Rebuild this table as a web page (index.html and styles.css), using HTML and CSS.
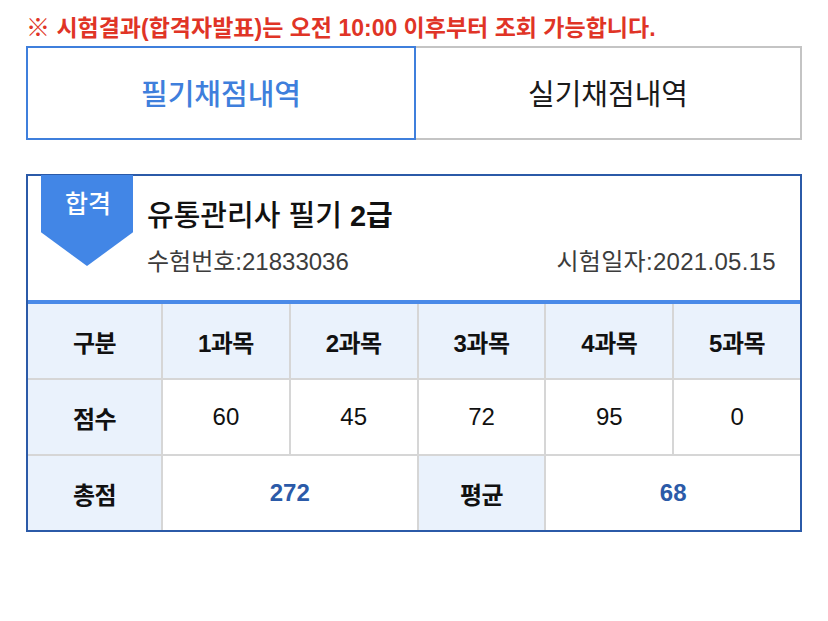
FILE: index.html
```html
<!DOCTYPE html>
<html lang="ko">
<head>
<meta charset="utf-8">
<link rel="stylesheet" href="styles.css">
</head>
<body>
<div class="page">
  <p class="notice"><span class="mark">※</span> 시험결과(합격자발표)는 오전 10:00 이후부터 조회 가능합니다.</p>
  <div class="tabs">
    <div class="tab tab-active">필기채점내역</div>
    <div class="tab">실기채점내역</div>
  </div>
  <div class="card">
    <div class="card-head">
      <div class="badge"><span>합격</span></div>
      <div class="title">유통관리사 필기 <b>2급</b></div>
      <div class="meta">
        <span>수험번호:21833036</span>
        <span>시험일자:2021.05.15</span>
      </div>
    </div>
    <div class="grid">
      <div class="cell th">구분</div>
      <div class="cell th">1과목</div>
      <div class="cell th">2과목</div>
      <div class="cell th">3과목</div>
      <div class="cell th">4과목</div>
      <div class="cell th">5과목</div>
      <div class="cell th">점수</div>
      <div class="cell">60</div>
      <div class="cell">45</div>
      <div class="cell">72</div>
      <div class="cell">95</div>
      <div class="cell">0</div>
      <div class="cell th">총점</div>
      <div class="cell total span2">272</div>
      <div class="cell th">평균</div>
      <div class="cell total span2">68</div>
    </div>
  </div>
</div>
</body>
</html>
```

FILE: styles.css
```css
html, body {
  margin: 0;
  padding: 0;
  background: #ffffff;
}
body {
  font-family: "Liberation Sans", "Noto Sans CJK KR", sans-serif;
  color: #111111;
}
.page {
  width: 776px;
  margin-left: 26px;
}
.notice {
  margin: 0;
  padding-top: 13px;
  height: 33px;
  line-height: 30px;
  font-size: 23px;
  font-weight: 700;
  color: #e03426;
  letter-spacing: 0;
  white-space: nowrap;
}
.mark {
  font-size: 24px;
}
.tabs {
  display: flex;
  height: 94px;
}
.tab {
  flex: 0 0 386px;
  box-sizing: border-box;
  border: 2px solid #c4c4c4;
  border-left: none;
  display: flex;
  align-items: center;
  justify-content: center;
  font-size: 29px;
  color: #1a1a1a;
  padding-bottom: 2px;
}
.tab-active {
  flex: 0 0 390px;
  border: 2px solid #3f7fdc;
  color: #3f7fdc;
  font-weight: 500;
}
.card {
  margin-top: 34px;
  border: 2px solid #2b5aa8;
}
.card-head {
  position: relative;
  height: 128px;
  box-sizing: border-box;
  padding: 21px 24px 0 119px;
  border-bottom: 4px solid #4a8ae8;
}
.badge {
  position: absolute;
  left: 13px;
  top: -1px;
  width: 92px;
  height: 91px;
  background: #4286e6;
  clip-path: polygon(0 0, 100% 0, 100% 63%, 50% 100%, 0 63%);
  color: #ffffff;
  font-size: 25px;
  font-weight: 500;
  text-align: center;
}
.badge span {
  display: block;
  padding-top: 13px;
  line-height: 32px;
  padding-left: 2px;
}
.title {
  font-size: 29px;
  line-height: 38px;
  font-weight: 500;
  color: #111111;
  letter-spacing: 0;
}
.title b {
  font-weight: 700;
}
.meta {
  display: flex;
  justify-content: space-between;
  margin-top: 12px;
  font-size: 24px;
  line-height: 30px;
  color: #3c3c3c;
}
.meta span:last-child {
  letter-spacing: 0.3px;
}
.grid {
  display: grid;
  grid-template-columns: 133px repeat(5, 1fr);
  grid-template-rows: 74px 74px 74px;
  column-gap: 2px;
  row-gap: 2px;
  background: #d6d6d6;
}
.cell {
  background: #ffffff;
  display: flex;
  align-items: center;
  justify-content: center;
  font-size: 24px;
  color: #111111;
}
.th {
  background: #eaf2fc;
  font-weight: 700;
  letter-spacing: -0.5px;
}
.total {
  color: #2b5aa8;
  font-weight: 700;
}
.span2 {
  grid-column: span 2;
}
```
